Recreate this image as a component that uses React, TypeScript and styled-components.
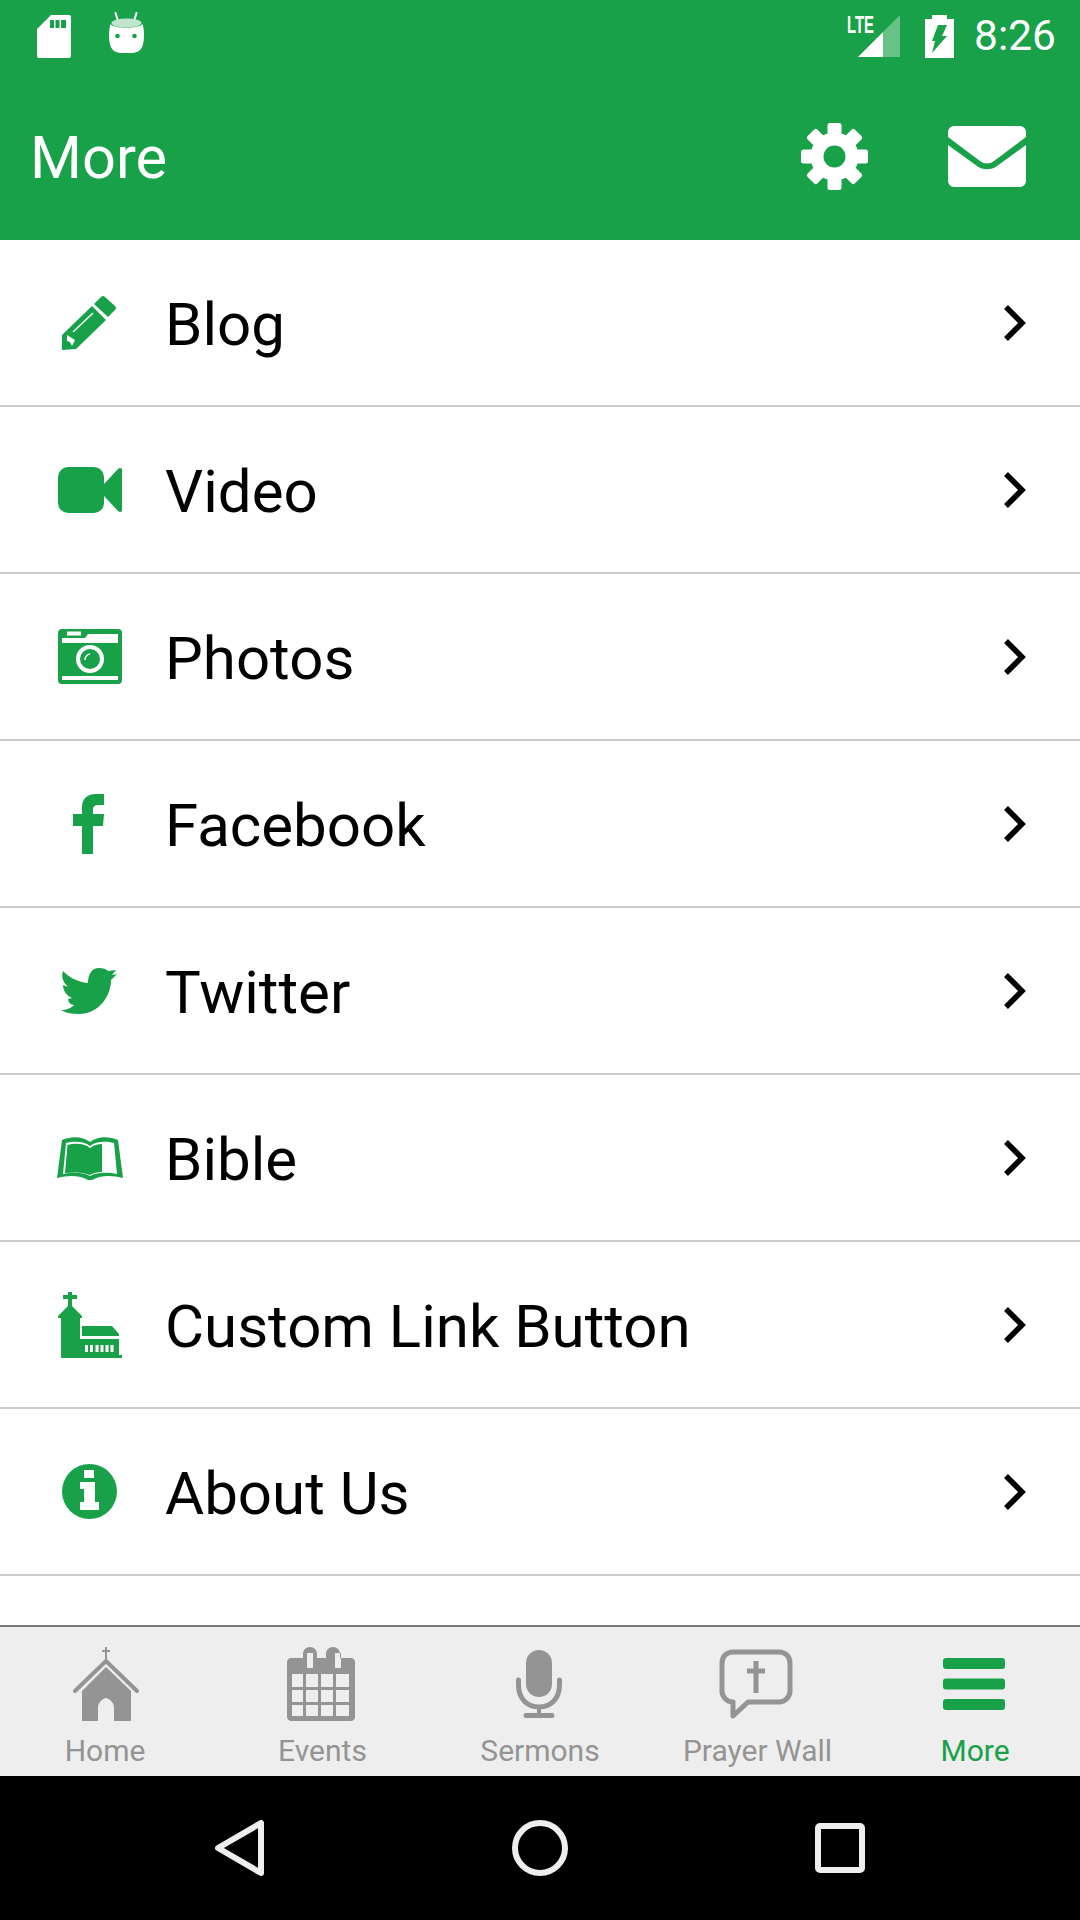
import React from 'react'
import styled, { createGlobalStyle } from 'styled-components'

const GREEN = '#18a148'
const GREY = '#949494'

const GlobalStyle = createGlobalStyle`
	html, body {
		margin: 0;
		padding: 0;
		background: #fff;
	}
	* {
		box-sizing: border-box;
	}
`

const Screen = styled.div`
	width: 1080px;
	height: 1920px;
	display: flex;
	flex-direction: column;
	background: #fff;
	font-family: Roboto, 'Liberation Sans', sans-serif;
	overflow: hidden;
`

const Header = styled.header`
	height: 240px;
	background: ${GREEN};
	color: #fff;
	display: flex;
	flex-direction: column;
`

const StatusBar = styled.div`
	height: 72px;
	display: flex;
	align-items: center;
	padding: 0 24px 0 37px;
`

const StatusLeft = styled.div`
	display: flex;
	align-items: center;
	gap: 38px;
	flex: 1;
`

const RaisedIcon = styled.span`
	display: flex;
	margin-top: -7px;
`

const StatusRight = styled.div`
	display: flex;
	align-items: center;
`

const SignalWrap = styled.div`
	position: relative;
	width: 53px;
	height: 42px;
	display: flex;
	justify-content: flex-end;
	margin-right: 25px;
`

const Lte = styled.span`
	position: absolute;
	left: 0;
	top: -2px;
	font-family: 'Liberation Sans Narrow', 'Liberation Sans', sans-serif;
	font-size: 24px;
	line-height: 24px;
	font-weight: 700;
	transform: scaleX(0.62);
	transform-origin: left center;
`

const Clock = styled.span`
	font-size: 42.5px;
	line-height: 72px;
	margin-left: 20px;
`

const Toolbar = styled.div`
	flex: 1;
	display: flex;
	align-items: center;
	padding: 0 54px 0 30px;
`

const Title = styled.h1`
	flex: 1;
	margin: 4px 0 0;
	font-size: 59.5px;
	font-weight: 400;
	line-height: 64px;
`

const ToolbarIcons = styled.div`
	display: flex;
	align-items: center;
	gap: 80px;
`

const Menu = styled.div`
	flex: 1;
	display: flex;
	flex-direction: column;
`

const Row = styled.div`
	height: 167px;
	flex: none;
	display: flex;
	align-items: center;
	padding: 0 53px 0 51px;
	border-bottom: 2px solid #cccccc;
`

const IconSlot = styled.div`
	width: 78px;
	height: 72px;
	margin-right: 36px;
	display: flex;
	align-items: center;
	justify-content: center;
	color: ${GREEN};
`

const RowLabel = styled.span`
	flex: 1;
	margin-top: 5px;
	font-size: 60px;
	line-height: 72px;
	color: #000;
`

const TabBar = styled.nav`
	height: 151px;
	flex: none;
	display: flex;
	justify-content: center;
	background: #eeeeee;
	border-top: 2px solid #777777;
`

const Tab = styled.div<{ $active?: boolean }>`
	width: 217.5px;
	flex: none;
	display: flex;
	flex-direction: column;
	align-items: center;
	padding-top: 18px;
	color: ${p => (p.$active ? GREEN : GREY)};
`

const TabIcon = styled.div`
	height: 78px;
	padding-right: 3px;
	display: flex;
	align-items: center;
	justify-content: center;
`

const TabLabel = styled.span`
	font-size: 30px;
	line-height: 34px;
	margin-top: 11px;
	white-space: nowrap;
`

const NavBar = styled.div`
	height: 144px;
	flex: none;
	background: #000;
	display: flex;
	align-items: center;
	justify-content: center;
`

const NavSlot = styled.div`
	width: 300px;
	display: flex;
	justify-content: center;
	color: #eeeeee;
`

const SdCard = () => (
	<svg width="34" height="43" viewBox="0 0 34 43">
		<path
			fill="#fff"
			fillRule="evenodd"
			d="M14 0h18a2 2 0 0 1 2 2v39a2 2 0 0 1-2 2H2a2 2 0 0 1-2-2V14zM13 5v8h4V5zM18.5 5v8h4V5zM24 5v8h5V5z"
		/>
	</svg>
)

const AndroidM = () => (
	<svg width="35" height="41" viewBox="0 0 35 41">
		<path d="M6.5 1l2.500 8M27.500 1L25 9" stroke="#fff" strokeWidth="2" strokeLinecap="round" />
		<ellipse cx="17.5" cy="11" rx="15" ry="4.5" fill="#bfe5cd" />
		<path
			fill="#fff"
			d="M1.500 12c4 5 28 5 32 0 2 6 2 16 0 22-2 5-6 7-11 7h-10c-5 0-9-2-11-7-2-6-2-16 0-22z"
		/>
		<circle cx="8.5" cy="24" r="2.3" fill={GREEN} />
		<circle cx="25.5" cy="24" r="2.3" fill={GREEN} />
	</svg>
)

const Signal = () => (
	<svg width="42" height="42" viewBox="0 0 42 42">
		<path fill="#fff" fillOpacity="0.35" d="M25 17L42 0v42H25z" />
		<path fill="#fff" d="M0 42h25V17z" />
	</svg>
)

const Battery = () => (
	<svg width="29" height="43" viewBox="0 0 29 43">
		<path
			fill="#fff"
			fillRule="evenodd"
			d="M7 0h15v4h7v39H0V4h7zM13 10h9l-5 11h5L7 38l3-12H7z"
		/>
	</svg>
)

const Gear = () => (
	<svg width="67" height="67" viewBox="0 0 67 67">
		{[0, 45, 90, 135].map(angle => (
			<rect
				key={angle}
				x="26.5"
				y="0"
				width="14"
				height="67"
				rx="2.5"
				fill="#fff"
				transform={`rotate(${angle} 33.5 33.5)`}
			/>
		))}
		<circle cx="33.5" cy="33.5" r="24" fill="#fff" />
		<circle cx="33.5" cy="33.5" r="11" fill={GREEN} />
	</svg>
)

const Envelope = () => (
	<svg width="78" height="61" viewBox="0 0 78 61">
		<path fill="#fff" d="M6 0h66a6 6 0 0 1 6 6v5L46 35a11 11 0 0 1-14 0L0 11V6a6 6 0 0 1 6-6z" />
		<path fill="#fff" d="M0 19l29 21a17 17 0 0 0 20 0l29-21v36a6 6 0 0 1-6 6H6a6 6 0 0 1-6-6z" />
	</svg>
)

const Pencil = () => (
	<svg width="56" height="54" viewBox="0 0 56 54">
		<path fill="currentColor" d="M30 10l14 14-30 29-14 1V39z" />
		<path fill="currentColor" d="M39 1a3 3 0 0 1 4 0l10 9a3 3 0 0 1 0 4l-7 7-14-13z" />
		<path stroke="#fff" strokeWidth="1.5" d="M11 36l20-19" />
		<path fill="#fff" d="M5 39l8 5-3 6-2-4-3-1z" />
	</svg>
)

const VideoCam = () => (
	<svg width="64" height="46" viewBox="0 0 64 46">
		<rect width="46" height="46" rx="10" fill="currentColor" />
		<path fill="currentColor" d="M46 17L60 2c2-2 4-1 4 1v40c0 2-2 3-4 1L46 29z" />
	</svg>
)

const Camera = () => (
	<svg width="64" height="55" viewBox="0 0 64 55">
		<rect width="64" height="55" rx="4" fill="currentColor" />
		<path fill="#fff" d="M9 2.500h14v4H9zM4 9h23l3-4h30v9H4zM4 47h56v4H4z" />
		<circle cx="32" cy="30" r="12" fill="none" stroke="#fff" strokeWidth="4" />
		<path d="M27 31a6 6 0 0 1 5-6" fill="none" stroke="#fff" strokeWidth="1.5" />
	</svg>
)

const FacebookF = () => (
	<svg width="35" height="60" viewBox="0 0 35 60">
		<path
			fill="currentColor"
			d="M9 60V32H0V20h9v-7C9 4 15 0 23 0h8v11h-5c-4 0-6 1-6 5v4h11l-1 12H20v28z"
		/>
	</svg>
)

const TwitterBird = () => (
	<svg width="58" height="46" viewBox="0 0 58 46">
		<path
			fill="currentColor"
			d="M2 3c6 6 14 11 25 12 0-9 4-15 11-15 4 0 7 1 9 3l8-1-4 5 5-1-6 6C50 28 38 46 18 46 11 46 5 45 0 42c5 0 9-1 13-5-3 0-6-3-6-6l4-1C6 28 2 23 2 17l5 2C2 14 0 9 2 3z"
		/>
	</svg>
)

const BibleBook = () => (
	<svg width="66" height="44" viewBox="0 0 66 44">
		<path
			fill="currentColor"
			d="M5 4c9-4 21-4 28 2 7-6 19-6 28-2l5 38c-11-3-23-3-31 2h-4c-8-5-20-5-31-2z"
		/>
		<path fill="#fff" d="M9 7c8-2 18-2 24 3 6-5 16-5 24-3l3 31c-9-2-20-2-27 2-7-4-18-4-27-2z" />
		<path fill="currentColor" d="M10.500 9c7-2 17-2 22.500 3 3-2.500 8-4 12-4v28c-4 0-9 1-12 3-7-3-15-3-25-2z" />
	</svg>
)

const Church = () => (
	<svg width="64" height="66" viewBox="0 0 64 66">
		<path fill="currentColor" d="M10 0h4v3h5v4h-5v7l10 10v2h-2v21h39v16h3v3H3V26H0v-2l10-10V7H5V3h5z" />
		<path fill="currentColor" d="M24 34h30l7 8v2H24z" />
		<path
			fill="#fff"
			d="M27 53h3v7h-3zM32 53h3v7h-3zM37.500 53h3v7h-3zM42.500 53h3v7h-3zM47.500 53h3v7h-3zM52.500 53h3v7h-3z"
		/>
	</svg>
)

const InfoCircle = () => (
	<svg width="57" height="55" viewBox="0 0 57 55">
		<path
			fill="currentColor"
			fillRule="evenodd"
			d="M27.500 0a27.500 27.500 0 1 1 0 55 27.500 27.500 0 0 1 0-55zM22 6v8h10V6zM18 18v7h4v13h-4v8h19v-8h-4V18z"
		/>
	</svg>
)

const Chevron = () => (
	<svg width="24" height="38" viewBox="0 0 24 38">
		<path d="M3 3l16 16L3 35" fill="none" stroke="#000" strokeWidth="5.5" />
	</svg>
)

const HomeIcon = () => (
	<svg width="70" height="74" viewBox="-4 0 70 74">
		<path d="M33 0v12M29 4h8" stroke="currentColor" strokeWidth="2" fill="none" />
		<path d="M2 44l31-30 31 30" stroke="currentColor" strokeWidth="4" strokeLinecap="round" fill="none" />
		<path fill="currentColor" d="M33 20l25 24v30H41V60c0-4-4-8-8-9-4 1-8 5-8 9v14H9V44z" />
	</svg>
)

const CalendarIcon = () => (
	<svg width="68" height="74" viewBox="0 0 68 74">
		<path
			fill="currentColor"
			fillRule="evenodd"
			d="M4 11h12V7c0-4 3-7 7-7s7 3 7 7v4h9V7c0-4 3-7 7-7s7 3 7 7v4h11c2 0 4 2 4 4v55c0 2-2 4-4 4H4c-2 0-4-2-4-4V15c0-2 2-4 4-4zM20 6v15h6V6zM48 6v15h6V6zM5 27v13h11V27zM19 27v13h12V27zM34 27v13h12V27zM49 27v13h13V27zM5 43v12h11V43zM19 43v12h12V43zM34 43v12h12V43zM49 43v12h13V43zM5 58v11h11V58zM19 58v11h12V58zM34 58v11h12V58zM49 58v11h13V58z"
		/>
	</svg>
)

const MicIcon = () => (
	<svg width="46" height="68" viewBox="0 0 46 68">
		<rect x="10" y="0" width="26" height="47" rx="13" fill="currentColor" />
		<path
			d="M2.500 30v5c0 14 9 22 20.500 22s20.500-8 20.500-22v-5"
			stroke="currentColor"
			strokeWidth="5"
			strokeLinecap="round"
			fill="none"
		/>
		<path d="M23 57v8" stroke="currentColor" strokeWidth="4" fill="none" />
		<path d="M10 65.500h26" stroke="currentColor" strokeWidth="5" strokeLinecap="round" fill="none" />
	</svg>
)

const PrayerIcon = () => (
	<svg width="74" height="70" viewBox="0 0 74 70">
		<path
			d="M14 3h46c6 0 11 4 11 11v28c0 6-5 11-11 11H29L14 67V53c-6 0-11-5-11-11V14C3 7 8 3 14 3z"
			fill="none"
			stroke="currentColor"
			strokeWidth="5"
			strokeLinejoin="round"
		/>
		<path d="M37 12v32M28 22h18" stroke="currentColor" strokeWidth="5" fill="none" />
	</svg>
)

const BarsIcon = () => (
	<svg width="62" height="52" viewBox="0 0 62 52">
		<rect y="0" width="62" height="11" rx="3" fill="currentColor" />
		<rect y="20.500" width="62" height="11" rx="3" fill="currentColor" />
		<rect y="41" width="62" height="11" rx="3" fill="currentColor" />
	</svg>
)

const NavBack = () => (
	<svg width="50" height="56" viewBox="0 0 50 56">
		<path d="M46 3v50L3 28z" fill="none" stroke="currentColor" strokeWidth="6" strokeLinejoin="round" />
	</svg>
)

const NavHome = () => (
	<svg width="56" height="56" viewBox="0 0 56 56">
		<circle cx="28" cy="28" r="25" fill="none" stroke="currentColor" strokeWidth="6" />
	</svg>
)

const NavRecent = () => (
	<svg width="50" height="50" viewBox="0 0 50 50">
		<rect x="3" y="3" width="44" height="44" rx="2" fill="none" stroke="currentColor" strokeWidth="6" />
	</svg>
)

const items = [
	{ label: 'Blog', icon: <Pencil /> },
	{ label: 'Video', icon: <VideoCam /> },
	{ label: 'Photos', icon: <Camera /> },
	{ label: 'Facebook', icon: <FacebookF /> },
	{ label: 'Twitter', icon: <TwitterBird /> },
	{ label: 'Bible', icon: <BibleBook /> },
	{ label: 'Custom Link Button', icon: <Church /> },
	{ label: 'About Us', icon: <InfoCircle /> },
]

const tabs = [
	{ label: 'Home', icon: <HomeIcon /> },
	{ label: 'Events', icon: <CalendarIcon /> },
	{ label: 'Sermons', icon: <MicIcon /> },
	{ label: 'Prayer Wall', icon: <PrayerIcon /> },
	{ label: 'More', icon: <BarsIcon />, active: true },
]

export default function App() {
	return (
		<Screen>
			<GlobalStyle />
			<Header>
				<StatusBar>
					<StatusLeft>
						<SdCard />
						<RaisedIcon>
							<AndroidM />
						</RaisedIcon>
					</StatusLeft>
					<StatusRight>
						<SignalWrap>
							<Lte>LTE</Lte>
							<Signal />
						</SignalWrap>
						<Battery />
						<Clock>8:26</Clock>
					</StatusRight>
				</StatusBar>
				<Toolbar>
					<Title>More</Title>
					<ToolbarIcons>
						<Gear />
						<Envelope />
					</ToolbarIcons>
				</Toolbar>
			</Header>
			<Menu>
				{items.map(item => (
					<Row key={item.label}>
						<IconSlot>{item.icon}</IconSlot>
						<RowLabel>{item.label}</RowLabel>
						<Chevron />
					</Row>
				))}
			</Menu>
			<TabBar>
				{tabs.map(tab => (
					<Tab key={tab.label} $active={tab.active}>
						<TabIcon>{tab.icon}</TabIcon>
						<TabLabel>{tab.label}</TabLabel>
					</Tab>
				))}
			</TabBar>
			<NavBar>
				<NavSlot>
					<NavBack />
				</NavSlot>
				<NavSlot>
					<NavHome />
				</NavSlot>
				<NavSlot>
					<NavRecent />
				</NavSlot>
			</NavBar>
		</Screen>
	)
}
